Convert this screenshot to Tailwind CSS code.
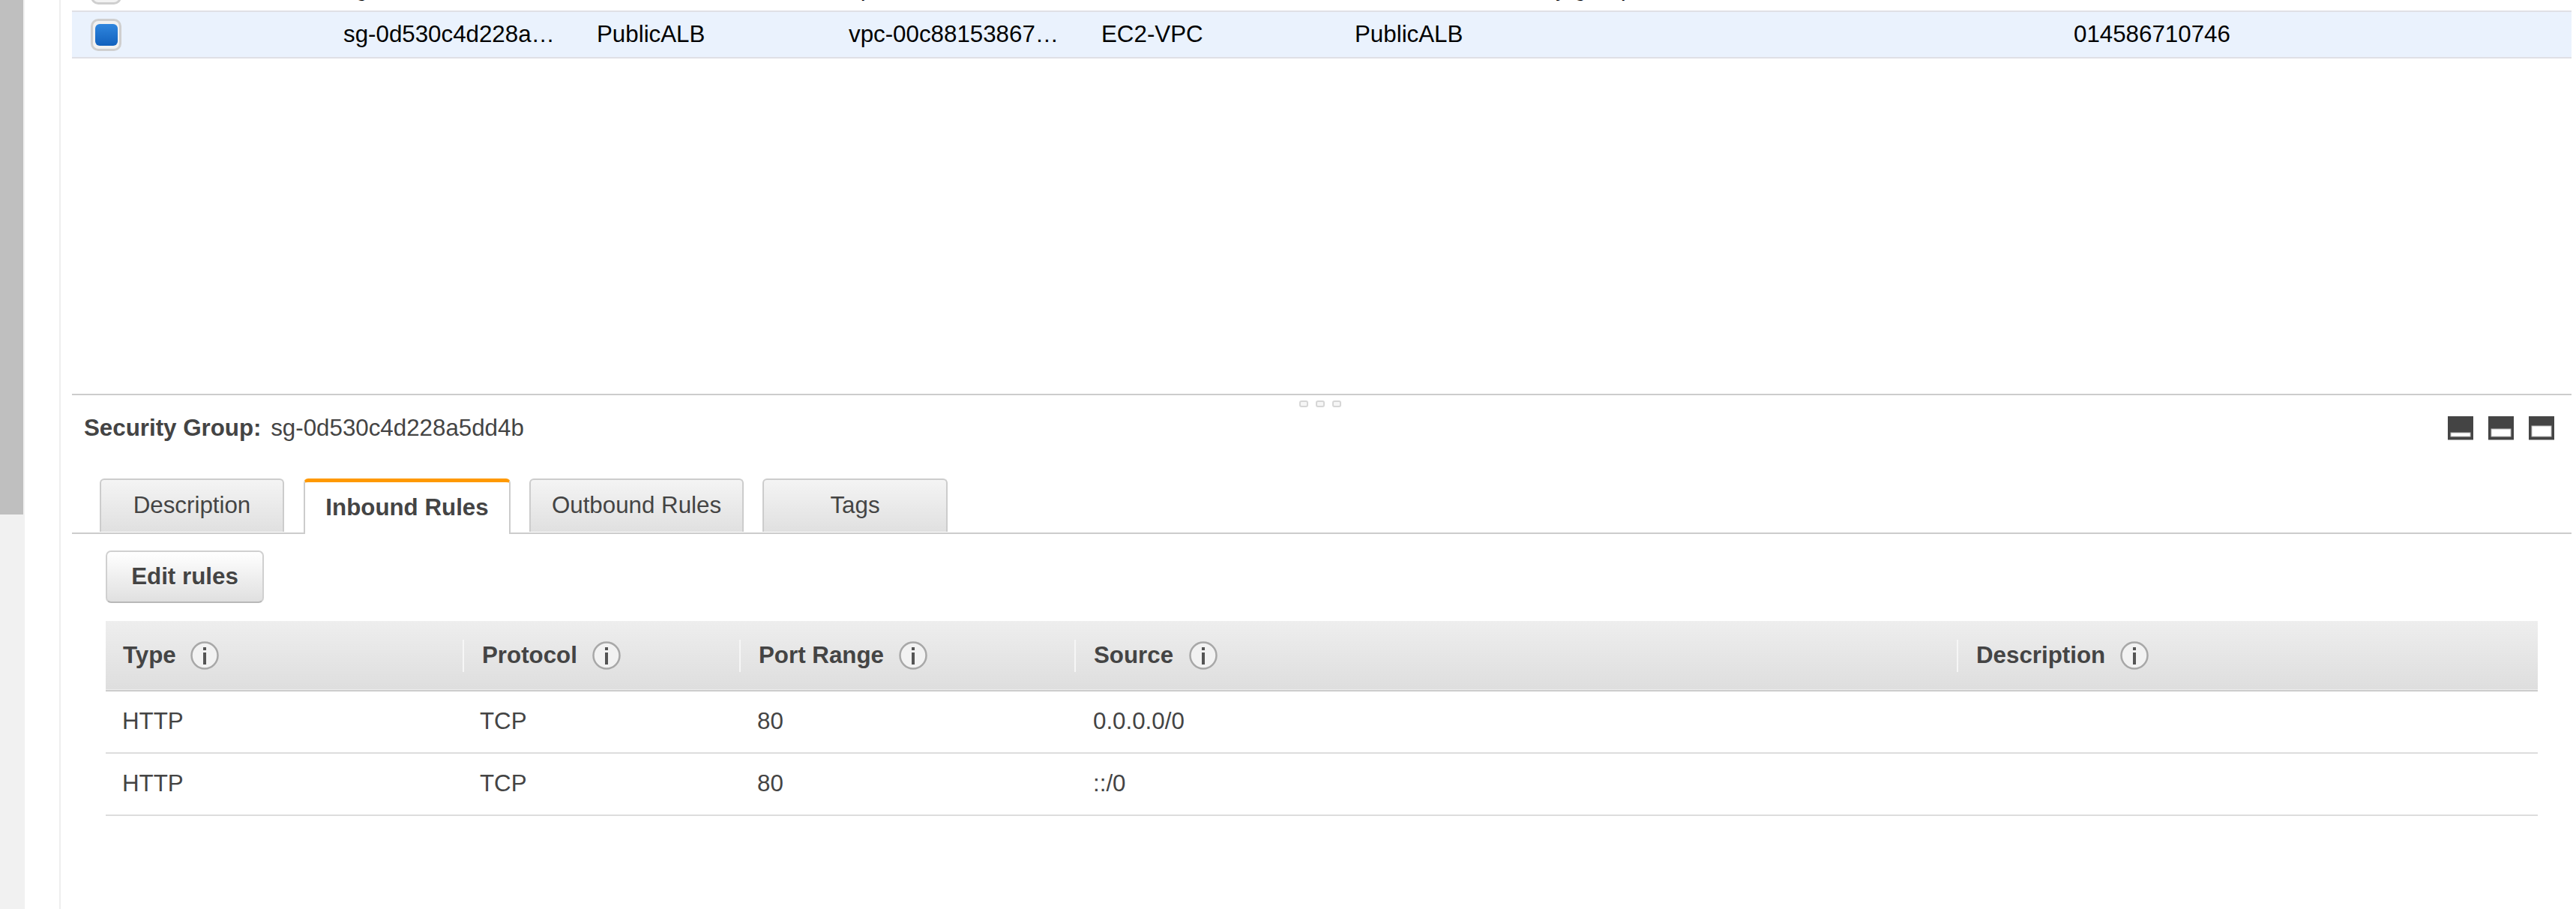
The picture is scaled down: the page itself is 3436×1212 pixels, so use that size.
<!DOCTYPE html>
<html lang="en">
<head>
<meta charset="UTF-8" />
<title>Security Groups</title>
<script src="https://cdn.jsdelivr.net/npm/@tailwindcss/browser@4"></script>
</head>
<body class="bg-white font-['Liberation_Sans',Arial,sans-serif] text-[31.3px] text-[#444] overflow-hidden">
<div class="flex w-[3436px] h-[1212px] overflow-hidden">

  <!-- scrollbar -->
  <div class="w-[33px] shrink-0 bg-[#f1f1f1]">
    <div class="w-[31px] h-[686px] bg-[#bfbfbf]"></div>
  </div>
  <div class="w-[46px] shrink-0"></div>

  <div class="flex-1 min-w-0 border-l-2 border-[#eeeeee] pl-[15px] pr-[6px]">

    <!-- list -->
    <div class="h-[525px]">
      <!-- previous row, scrolled almost out of view -->
      <div class="h-[14px] overflow-hidden">
        <div class="flex items-center h-[60px] -mt-[46px] text-black whitespace-nowrap">
          <div class="w-[362px] pl-[25px]">
            <div class="w-[41px] h-[43px] rounded-[10px] border-[3px] border-[#cfcfcf] bg-[#f3f3f3]"></div>
          </div>
          <div class="w-[338px]">sg-0a91c27e5f3b…</div>
          <div class="w-[336px]">default</div>
          <div class="w-[337px]">vpc-00c88153867…</div>
          <div class="w-[338px]">EC2-VPC</div>
          <div class="w-[959px]">default VPC security group</div>
          <div>014586710746</div>
        </div>
      </div>
      <div class="flex items-center h-[64px] bg-[#eaf2fd] border-y-2 border-[#dfe0e6] text-black whitespace-nowrap">
        <div class="w-[362px] pl-[25px]">
          <div class="flex items-center justify-center w-[41px] h-[43px] rounded-[10px] border-[3px] border-[#cfcfcf] bg-[#f1f1f1]">
            <div class="w-[30px] h-[29px] rounded-[6px] bg-gradient-to-b from-[#2f86de] to-[#1161bd]"></div>
          </div>
        </div>
        <div class="w-[338px] pt-[1px]">sg-0d530c4d228a…</div>
        <div class="w-[336px] pt-[1px]">PublicALB</div>
        <div class="w-[337px] pt-[1px]">vpc-00c88153867…</div>
        <div class="w-[338px] pt-[1px]">EC2-VPC</div>
        <div class="w-[959px] pt-[1px]">PublicALB</div>
        <div class="pt-[1px]">014586710746</div>
      </div>
    </div>

    <!-- detail pane -->
    <div class="relative border-t-2 border-[#cccccc]">
      <div class="absolute left-[1637px] top-[7px] flex gap-[10px]">
        <span class="w-[12px] h-[9px] rounded-[3px] border-2 border-[#d6d6d6] bg-[#f6f6f6]"></span>
        <span class="w-[12px] h-[9px] rounded-[3px] border-2 border-[#d6d6d6] bg-[#f6f6f6]"></span>
        <span class="w-[12px] h-[9px] rounded-[3px] border-2 border-[#d6d6d6] bg-[#f6f6f6]"></span>
      </div>

      <div class="flex items-center justify-between h-[111px] pl-[16px] pr-[23px] pb-[22px]">
        <div class="whitespace-nowrap"><b class="font-bold">Security Group:</b> <span class="ml-[4px]">sg-0d530c4d228a5dd4b</span></div>
        <div class="flex gap-[20px] -mt-[2px]">
          <svg width="34" height="32" viewBox="0 0 34 32"><rect width="34" height="31" fill="#444"/><rect y="31" width="34" height="1" fill="#aaa"/><rect x="4" y="22" width="26" height="5" fill="#fff" stroke="#bbb"/></svg>
          <svg width="34" height="32" viewBox="0 0 34 32"><rect width="34" height="31" fill="#444"/><rect y="31" width="34" height="1" fill="#aaa"/><rect x="4" y="17" width="26" height="10" fill="#fff" stroke="#bbb"/></svg>
          <svg width="34" height="32" viewBox="0 0 34 32"><rect width="34" height="31" fill="#444"/><rect y="31" width="34" height="1" fill="#aaa"/><rect x="4" y="13" width="26" height="14" fill="#fff" stroke="#bbb"/></svg>
        </div>
      </div>

      <!-- tabs -->
      <div class="flex items-start h-[74px] pl-[37px] border-b-2 border-[#cccccc] text-center">
        <div class="w-[246px] h-[71px] mr-[26px] flex items-center justify-center rounded-t-[6px] border-2 border-b-0 border-[#cccccc] bg-gradient-to-b from-[#f4f4f4] to-[#e0e0e0]">Description</div>
        <div class="w-[276px] h-[74px] mr-[25px] flex items-center justify-center rounded-t-[6px] border-x-2 border-t-[5px] border-x-[#cccccc] border-t-[#ff9900] bg-white font-bold relative z-10">Inbound Rules</div>
        <div class="w-[286px] h-[71px] mr-[25px] flex items-center justify-center rounded-t-[6px] border-2 border-b-0 border-[#cccccc] bg-gradient-to-b from-[#f4f4f4] to-[#e0e0e0]">Outbound Rules</div>
        <div class="w-[247px] h-[71px] flex items-center justify-center rounded-t-[6px] border-2 border-b-0 border-[#cccccc] bg-gradient-to-b from-[#f4f4f4] to-[#e0e0e0]">Tags</div>
      </div>

      <div class="pl-[45px] pr-[45px] pt-[22px]">
        <button class="block w-[211px] h-[70px] rounded-[7px] border-2 border-[#d0d0d0] border-b-[#b8b8b8] bg-gradient-to-b from-white to-[#e0e0e0] font-bold [text-shadow:0_1px_1px_#fff]">Edit rules</button>

        <!-- rules table -->
        <table class="mt-[24px] w-[3244px] table-fixed border-collapse">
          <colgroup>
            <col class="w-[476px]" /><col class="w-[369px]" /><col class="w-[447px]" /><col class="w-[1177px]" /><col class="w-[775px]" />
          </colgroup>
          <thead>
            <tr class="h-[93px] bg-gradient-to-b from-[#eeeeee] to-[#dedede] border-b-2 border-[#cccccc] text-left font-bold">
              <th class="pl-[23px]">
                <div class="flex items-center">Type
                  <svg class="ml-[19px]" width="38" height="38" viewBox="0 0 38 38"><circle cx="19" cy="19" r="17.5" fill="#f2f2f2" stroke="#a8a8a8" stroke-width="2.5"/><rect x="17" y="15" width="4" height="16" fill="#555"/><rect x="17" y="8" width="4" height="4" fill="#555"/></svg>
                </div>
              </th>
              <th>
                <div class="flex items-center h-[43px] pl-[24px] border-l-2 border-[#f6f6f6]">Protocol
                  <svg class="ml-[20px]" width="38" height="38" viewBox="0 0 38 38"><circle cx="19" cy="19" r="17.5" fill="#f2f2f2" stroke="#a8a8a8" stroke-width="2.5"/><rect x="17" y="15" width="4" height="16" fill="#555"/><rect x="17" y="8" width="4" height="4" fill="#555"/></svg>
                </div>
              </th>
              <th>
                <div class="flex items-center h-[43px] pl-[24px] border-l-2 border-[#f6f6f6]">Port Range
                  <svg class="ml-[20px]" width="38" height="38" viewBox="0 0 38 38"><circle cx="19" cy="19" r="17.5" fill="#f2f2f2" stroke="#a8a8a8" stroke-width="2.5"/><rect x="17" y="15" width="4" height="16" fill="#555"/><rect x="17" y="8" width="4" height="4" fill="#555"/></svg>
                </div>
              </th>
              <th>
                <div class="flex items-center h-[43px] pl-[24px] border-l-2 border-[#f6f6f6]">Source
                  <svg class="ml-[21px]" width="38" height="38" viewBox="0 0 38 38"><circle cx="19" cy="19" r="17.5" fill="#f2f2f2" stroke="#a8a8a8" stroke-width="2.5"/><rect x="17" y="15" width="4" height="16" fill="#555"/><rect x="17" y="8" width="4" height="4" fill="#555"/></svg>
                </div>
              </th>
              <th>
                <div class="flex items-center h-[43px] pl-[24px] border-l-2 border-[#f6f6f6]">Description
                  <svg class="ml-[20px]" width="38" height="38" viewBox="0 0 38 38"><circle cx="19" cy="19" r="17.5" fill="#f2f2f2" stroke="#a8a8a8" stroke-width="2.5"/><rect x="17" y="15" width="4" height="16" fill="#555"/><rect x="17" y="8" width="4" height="4" fill="#555"/></svg>
                </div>
              </th>
            </tr>
          </thead>
          <tbody>
            <tr class="h-[83px] border-b-2 border-[#dddddd]">
              <td class="pl-[22px]">HTTP</td><td class="pl-[23px]">TCP</td><td class="pl-[24px]">80</td><td class="pl-[25px]">0.0.0.0/0</td><td></td>
            </tr>
            <tr class="h-[83px] border-b-2 border-[#dddddd]">
              <td class="pl-[22px]">HTTP</td><td class="pl-[23px]">TCP</td><td class="pl-[24px]">80</td><td class="pl-[25px]">::/0</td><td></td>
            </tr>
          </tbody>
        </table>
      </div>
    </div>
  </div>
</div>
</body>
</html>
